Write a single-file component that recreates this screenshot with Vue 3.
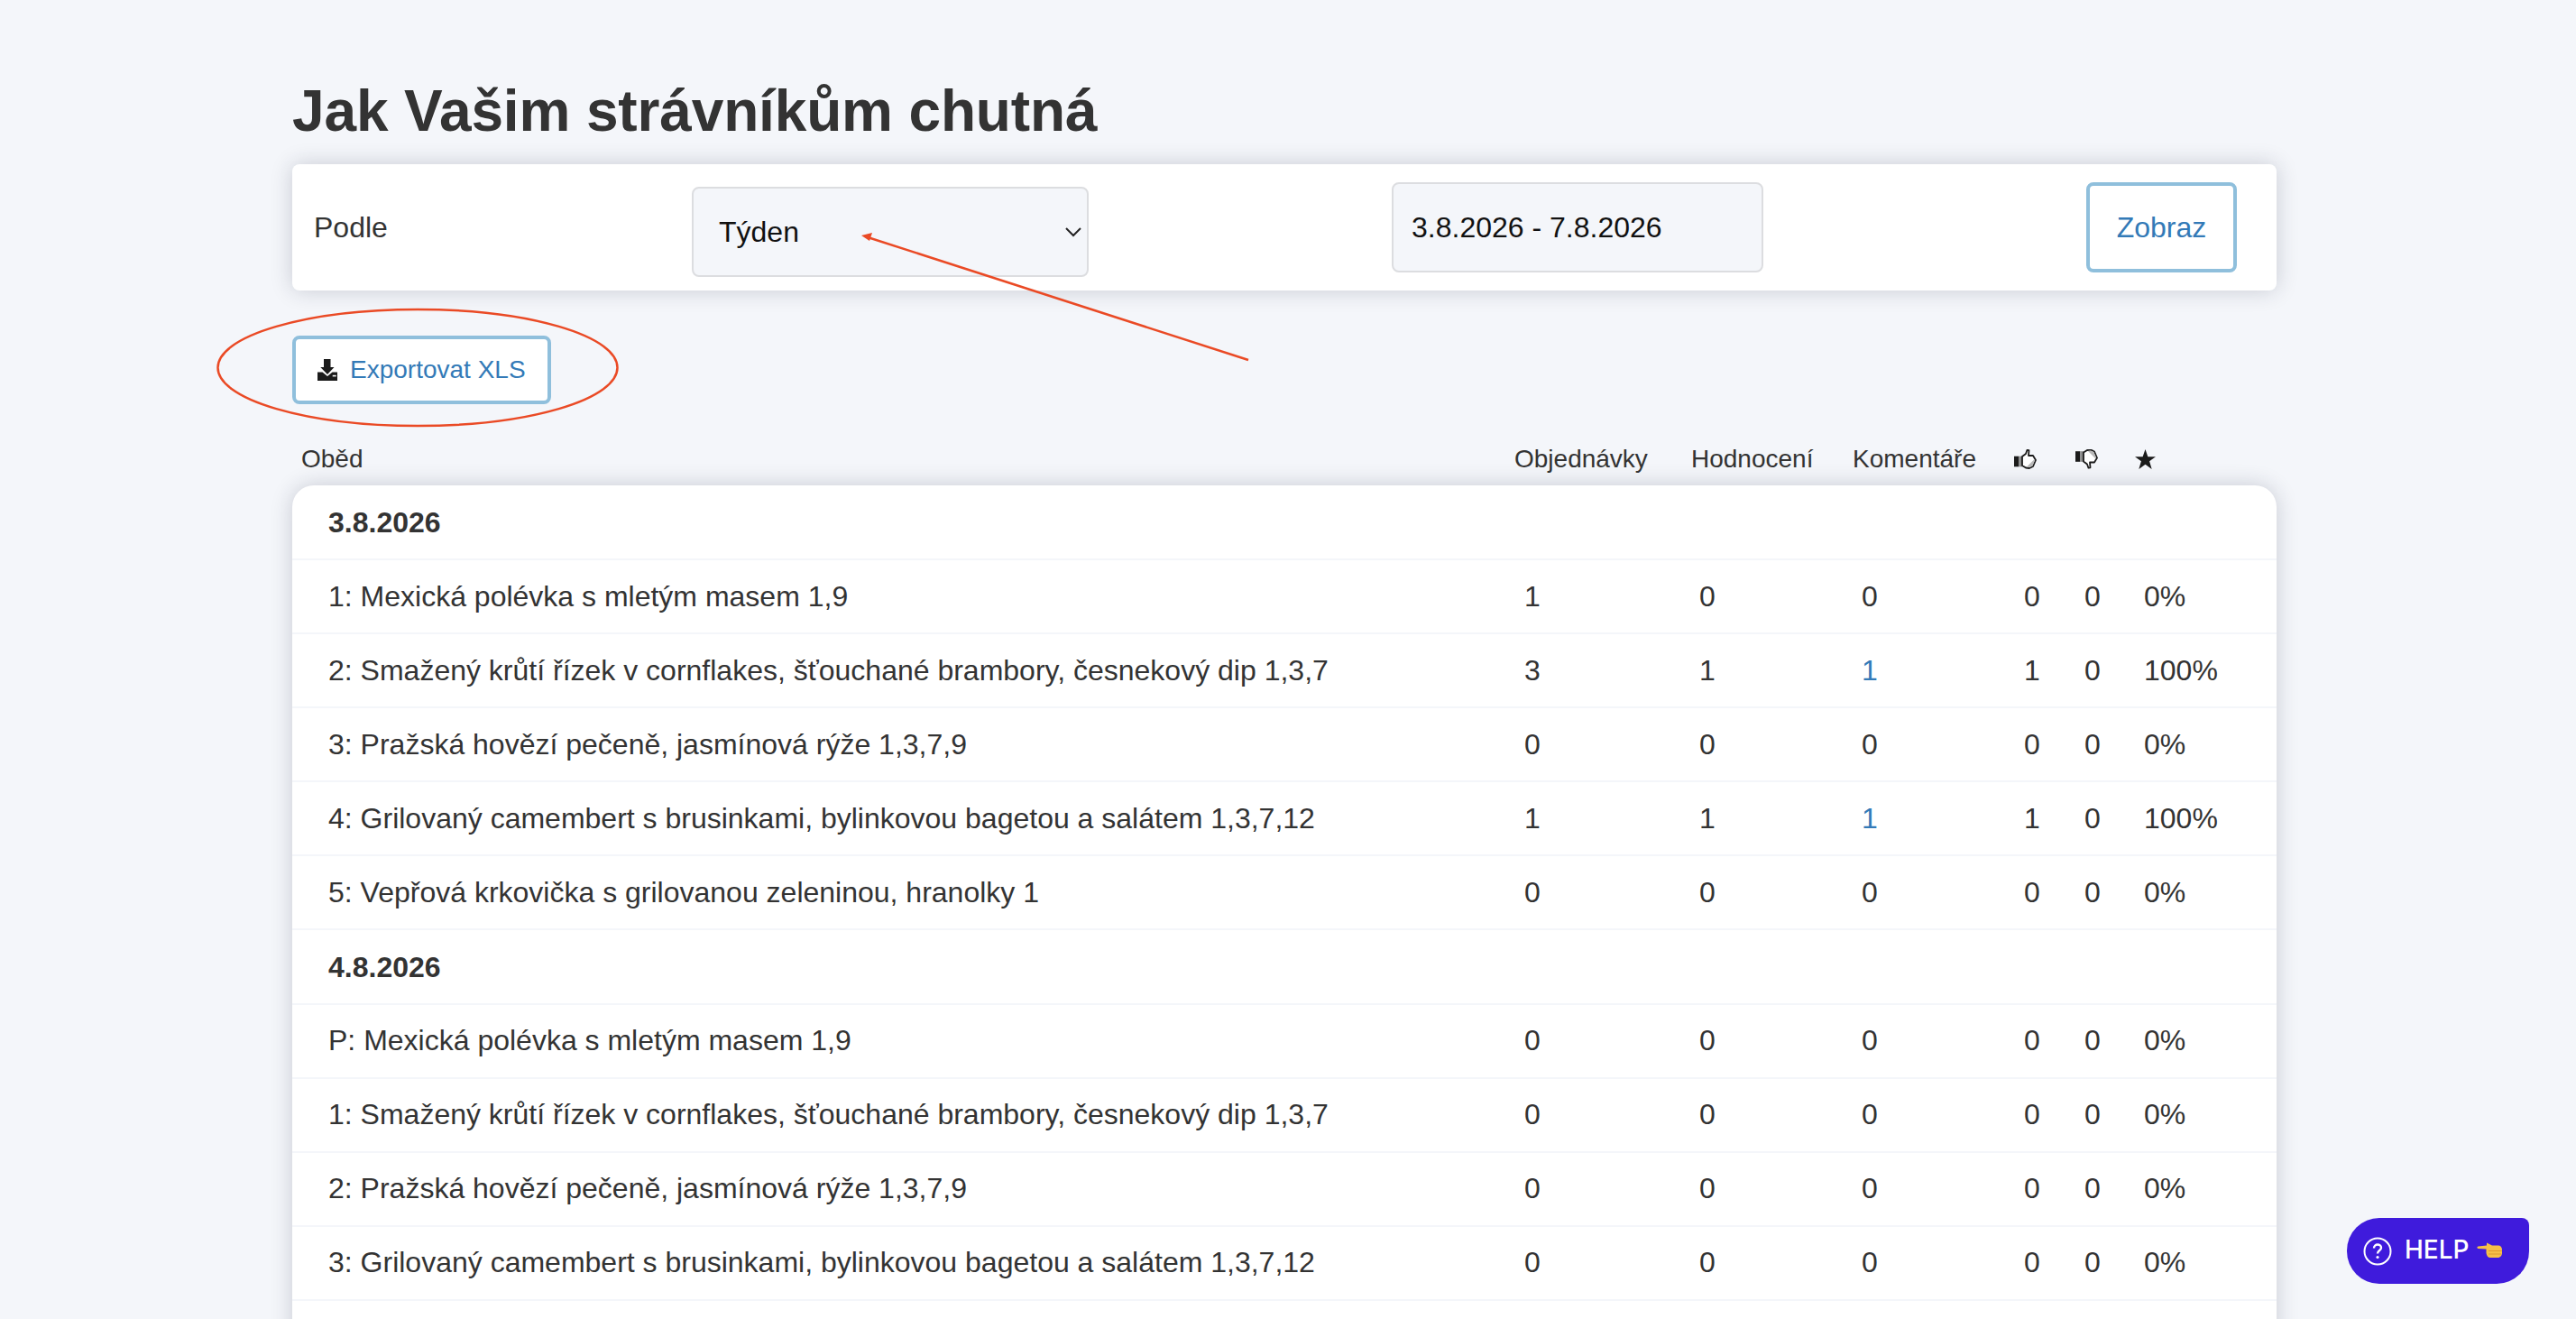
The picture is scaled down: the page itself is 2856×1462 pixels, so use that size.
<script setup>
const rows = [
  { date: '3.8.2026' },
  { name: '1: Mexická polévka s mletým masem 1,9', orders: 1, ratings: 0, comments: 0, up: 0, down: 0, pct: '0%' },
  { name: '2: Smažený krůtí řízek v cornflakes, šťouchané brambory, česnekový dip 1,3,7', orders: 3, ratings: 1, comments: 1, up: 1, down: 0, pct: '100%' },
  { name: '3: Pražská hovězí pečeně, jasmínová rýže 1,3,7,9', orders: 0, ratings: 0, comments: 0, up: 0, down: 0, pct: '0%' },
  { name: '4: Grilovaný camembert s brusinkami, bylinkovou bagetou a salátem 1,3,7,12', orders: 1, ratings: 1, comments: 1, up: 1, down: 0, pct: '100%' },
  { name: '5: Vepřová krkovička s grilovanou zeleninou, hranolky 1', orders: 0, ratings: 0, comments: 0, up: 0, down: 0, pct: '0%' },
  { date: '4.8.2026' },
  { name: 'P: Mexická polévka s mletým masem 1,9', orders: 0, ratings: 0, comments: 0, up: 0, down: 0, pct: '0%' },
  { name: '1: Smažený krůtí řízek v cornflakes, šťouchané brambory, česnekový dip 1,3,7', orders: 0, ratings: 0, comments: 0, up: 0, down: 0, pct: '0%' },
  { name: '2: Pražská hovězí pečeně, jasmínová rýže 1,3,7,9', orders: 0, ratings: 0, comments: 0, up: 0, down: 0, pct: '0%' },
  { name: '3: Grilovaný camembert s brusinkami, bylinkovou bagetou a salátem 1,3,7,12', orders: 0, ratings: 0, comments: 0, up: 0, down: 0, pct: '0%' },
]
</script>

<template>
  <div class="page">
    <h1 class="title">Jak Vašim strávníkům chutná</h1>

    <div class="filter">
      <label class="filter-label">Podle</label>
      <div class="select">
        <span>Týden</span>
        <svg class="chevron" width="18" height="11" viewBox="0 0 18 11"><path d="M1 1l8 8 8-8" fill="none" stroke="#222" stroke-width="2"/></svg>
      </div>
      <div class="date">3.8.2026 - 7.8.2026</div>
      <button class="btn btn-show">Zobraz</button>
    </div>

    <button class="btn btn-export">
      <svg width="22" height="24" viewBox="0 0 22 24">
        <path d="M7 0h7.500v9h4L11 17 3.300 9H7z" fill="#1b1b1b"/>
        <path d="M0 14.500h5.500l5.500 4.500 5.500-4.500H22V24H0z" fill="#1b1b1b"/>
        <rect x="16.700" y="17.800" width="4" height="1.600" fill="#fff"/>
      </svg>
      Exportovat XLS
    </button>

    <div class="head">
      <div class="head-name">Oběd</div>
      <div>Objednávky</div>
      <div>Hodnocení</div>
      <div>Komentáře</div>
      <div>
        <svg class="head-icon" width="25" height="22" viewBox="0 0 25 22">
          <rect x="0" y="7.700" width="5.300" height="11.600" fill="#1b1b1b"/>
          <rect x="5.300" y="7.700" width="3.700" height="11.600" fill="#8c8c8c"/>
          <path d="M9 8l4-3 1.500-4.200 2 .4L16 7h5l3 5-3 7-4 2-4-.5-4-2.500z" fill="#fff" stroke="#1b1b1b" stroke-width="1.800" stroke-linejoin="round"/>
          <path d="M14 19.500l8.500-8.500 .7 1-2.800 6.400-3.600 1.700z" fill="#b8b8b8"/>
        </svg>
      </div>
      <div>
        <svg class="head-icon" width="25" height="22" viewBox="0 0 25 22">
          <g transform="translate(0 21.500) scale(1 -1)">
            <rect x="0" y="7.700" width="5.300" height="11.600" fill="#1b1b1b"/>
            <rect x="5.300" y="7.700" width="3.700" height="11.600" fill="#8c8c8c"/>
            <path d="M9 8l4-3 1.500-4.200 2 .4L16 7h5l3 5-3 7-4 2-4-.5-4-2.500z" fill="#fff" stroke="#1b1b1b" stroke-width="1.800" stroke-linejoin="round"/>
            <path d="M14 19.500l8.500-8.500 .7 1-2.800 6.400-3.600 1.700z" fill="#b8b8b8"/>
          </g>
        </svg>
      </div>
      <div>
        <svg class="head-icon" width="23" height="22" viewBox="0 0 24 23"><path d="M12 0l3 8.500h9l-7.200 5.300L19.500 23 12 17.500 4.500 23l2.700-9.200L0 8.500h9z" fill="#1b1b1b"/></svg>
      </div>
      <div></div>
    </div>

    <div class="table">
      <template v-for="(row, i) in rows" :key="i">
        <div v-if="row.date" class="row row-date" :class="{ first: i === 0 }">{{ row.date }}</div>
        <div v-else class="row row-item">
          <div class="cell-name">{{ row.name }}</div>
          <div>{{ row.orders }}</div>
          <div>{{ row.ratings }}</div>
          <div :class="{ link: row.comments > 0 }">{{ row.comments }}</div>
          <div>{{ row.up }}</div>
          <div>{{ row.down }}</div>
          <div>{{ row.pct }}</div>
        </div>
      </template>
      <div class="row"></div>
    </div>

    <svg class="marks" width="2856" height="1462" viewBox="0 0 2856 1462">
      <ellipse cx="463" cy="407.500" rx="221.500" ry="64.500" fill="none" stroke="#ea4a25" stroke-width="2.500"/>
      <line x1="1384" y1="399" x2="962" y2="263" stroke="#ea4a25" stroke-width="2.500"/>
      <path d="M955 261l12-3-3 9z" fill="#ea4a25"/>
    </svg>

    <button class="help">
      <svg width="32" height="32" viewBox="0 0 32 32">
        <circle cx="16" cy="16" r="14.500" fill="none" stroke="#fff" stroke-width="2"/>
        <path d="M12 12.500c0-2.500 2-4 4-4s4 1.500 4 3.500c0 3-4 3-4 6.500" fill="none" stroke="#fff" stroke-width="2.400"/>
        <circle cx="16" cy="22.500" r="1.600" fill="#fff"/>
      </svg>
      <span class="help-text">HELP</span>
      <svg class="help-hand" width="28" height="17" viewBox="0 0 28 17">
        <path d="M1.500 4.500 11 3.500 11 .5l6 3h7c2 0 4 2 4 4.500v4c0 2.500-2 5-4.500 5H15c-2.500 0-4-2-4.500-5V7.500L1.500 7C0 6.800 0 4.800 1.500 4.500z" fill="#f6c048"/>
        <path d="M13 9.500h15M13 13h14" stroke="#dd9a30" stroke-width="1"/>
      </svg>
    </button>
  </div>
</template>

<style scoped>
.page {
  position: relative;
  height: 1462px;
  overflow: hidden;
  padding: 0 332px 0 324px;
  box-sizing: border-box;
  background: #f4f6fa;
  font-family: "Liberation Sans", Arial, sans-serif;
  color: #333;
}

.title {
  margin: 0;
  padding-top: 84px;
  height: 98px;
  font-size: 64px;
  line-height: 78px;
  font-weight: 700;
  letter-spacing: -0.15px;
  color: #333;
  box-sizing: content-box;
}

.filter {
  height: 140px;
  display: flex;
  align-items: flex-start;
  background: #fff;
  border-radius: 8px;
  box-shadow: 0 0 24px rgba(30, 35, 60, 0.2);
  font-size: 32px;
}

.filter-label {
  margin: 52px 0 0 24px;
  width: 419px;
  line-height: 36px;
}

.select {
  margin-top: 25px;
  width: 440px;
  height: 100px;
  box-sizing: border-box;
  padding: 0 6px 0 28px;
  display: flex;
  align-items: center;
  justify-content: space-between;
  background: #f4f6fa;
  border: 2px solid #dcdde0;
  border-radius: 8px;
  color: #111;
}

.date {
  margin: 20px 0 0 336px;
  width: 412px;
  height: 100px;
  box-sizing: border-box;
  padding: 0 20px;
  line-height: 96px;
  background: #f4f6fa;
  border: 2px solid #dcdde0;
  border-radius: 8px;
  color: #111;
}

.btn {
  box-sizing: border-box;
  background: #fff;
  border: 4px solid #8fbfdc;
  border-radius: 8px;
  color: #337ab7;
  font-family: inherit;
}

.btn-show {
  margin: 20px 0 0 358px;
  width: 167px;
  height: 100px;
  font-size: 32px;
  padding: 0;
}

.btn-export {
  display: flex;
  align-items: center;
  gap: 14px;
  margin-top: 50px;
  width: 287px;
  height: 76px;
  padding: 0 0 0 24px;
  font-size: 28px;
}

.head {
  display: grid;
  grid-template-columns: 1355px 196px 179px 179px 68px 66px 1fr;
  align-items: center;
  height: 90px;
  box-sizing: border-box;
  padding-top: 40px;
  font-size: 28px;
  color: #333;
}

.head-name {
  padding-left: 10px;
}

.head-icon {
  display: block;
}

.table {
  background: #fff;
  border-radius: 24px 24px 0 0;
  box-shadow: 0 0 24px rgba(30, 35, 60, 0.2);
  font-size: 32px;
}

.row {
  height: 82.1px;
  box-sizing: border-box;
  border-bottom: 2px solid #f4f6fa;
}

.row-item {
  display: grid;
  grid-template-columns: 1366px 194px 180px 180px 67px 66px 1fr;
  align-items: center;
}

.row-date {
  padding-left: 40px;
  line-height: 82px;
  font-weight: 700;
}

.row-date.first {
  height: 83px;
  line-height: 83px;
}

.cell-name {
  padding-left: 40px;
}

.link {
  color: #337ab7;
}

.marks {
  position: absolute;
  left: 0;
  top: 0;
  pointer-events: none;
}

.help {
  position: absolute;
  left: 2602px;
  top: 1350px;
  width: 202px;
  height: 73px;
  display: flex;
  align-items: center;
  padding: 0 0 0 18px;
  box-sizing: border-box;
  background: #3f1bdc;
  border: none;
  border-radius: 36px 8px 36px 36px;
  color: #fff;
  font-family: Inter, sans-serif;
  font-size: 28px;
  font-weight: 500;
}

.help-text {
  margin: 0 10px 3px 14px;
  width: 70px;
  text-align: left;
  white-space: nowrap;
}

.help-hand {
  margin-bottom: 3px;
}
</style>
